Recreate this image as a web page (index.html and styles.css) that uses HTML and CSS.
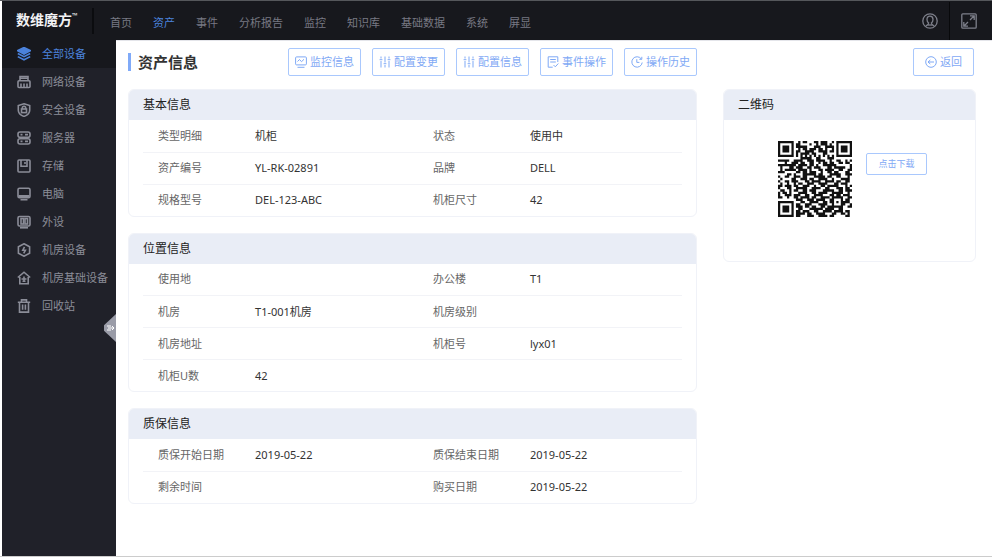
FILE: index.html
```
<!DOCTYPE html>
<html lang="zh-CN">
<head>
    <meta charset="UTF-8">
    <title>资产信息 - 数维魔方</title>
    <link rel="stylesheet" href="styles.css">
</head>
<body>

<header class="topbar">
    <a class="logo" href="#">数维魔方<sup>™</sup></a>
    <nav class="topnav">
        <a href="#">首页</a>
        <a href="#" class="active">资产</a>
        <a href="#">事件</a>
        <a href="#">分析报告</a>
        <a href="#">监控</a>
        <a href="#">知识库</a>
        <a href="#">基础数据</a>
        <a href="#">系统</a>
        <a href="#">屏显</a>
    </nav>
    <button class="top-button" aria-label="用户">
        <svg viewBox="0 0 16 16"><circle cx="8" cy="8" r="7.2"/><path d="M8 3.200c-2 0-3 1.300-3 3.200 0 1.600.6 2.800 1.600 3.600L6 11.500 3.800 13M8 3.200c2 0 3 1.300 3 3.200 0 1.600-.6 2.800-1.600 3.600l.6 1.500 2.200 1.500"/><path d="M5.500 12h5"/></svg>
    </button>
    <button class="top-button bordered" aria-label="全屏">
        <svg viewBox="0 0 16 16"><rect x="0.800" y="0.800" width="14.400" height="14.400" rx="1"/><path d="M9 2.800h4.200V7M13.200 2.800L9 7M7 13.200H2.800V9M2.800 13.200L7 9"/></svg>
    </button>
</header>

<div class="layout">
    <aside class="sidebar">
        <a href="#" class="active">
            <svg viewBox="0 0 14 14"><path class="solid" d="M7 .5l6.500 3.200L7 7 .5 3.700z"/><path d="M.8 6.500L7 9.600l6.200-3.100M.8 9.600L7 12.800l6.200-3.200"/></svg>
            全部设备
        </a>
        <a href="#">
            <svg viewBox="0 0 14 14"><path d="M3 5V1.500h8V5M3 3.300h8"/><rect x="1" y="5.800" width="12" height="6.700" rx="1"/><path d="M4 8.500v4M7 8.500v4M10 8.500v4"/></svg>
            网络设备
        </a>
        <a href="#">
            <svg viewBox="0 0 14 14"><path d="M7 .8l5.700 1.800v4.600c0 2.800-2.200 4.900-5.700 6.200C3.500 12.100 1.300 10 1.300 7.200V2.600z"/><path d="M5.300 6V5a1.700 1.700 0 0 1 3.400 0v1"/><rect x="4.500" y="6" width="5" height="3.600"/></svg>
            安全设备
        </a>
        <a href="#">
            <svg viewBox="0 0 14 14"><rect x="1" y="1" width="12" height="5.200" rx="2"/><rect x="1" y="7.800" width="12" height="5.200" rx="2"/><path d="M3.500 3.600h2M8 3.600h3M3.500 10.400h2M8 10.400h3"/></svg>
            服务器
        </a>
        <a href="#">
            <svg viewBox="0 0 14 14"><rect x="1" y="1" width="12" height="12" rx="1"/><path d="M4 1v6.200h6V1M8 3v2"/></svg>
            存储
        </a>
        <a href="#">
            <svg viewBox="0 0 14 14"><rect x="1" y="1.200" width="12" height="9.500" rx="1.500"/><path d="M1.500 8.800h11M1.500 9.800h11M3.500 12.800h7"/></svg>
            电脑
        </a>
        <a href="#">
            <svg viewBox="0 0 14 14"><rect x="1" y="1.500" width="12" height="9.500" rx="1.500"/><rect x="4" y="3.500" width="2.500" height="5.500"/><rect x="8" y="3.500" width="2.500" height="5.500"/><path d="M3 12.800h8"/></svg>
            外设
        </a>
        <a href="#">
            <svg viewBox="0 0 14 14"><path d="M7 .8l5.600 3v6.400L7 13.200l-5.600-3V3.800z"/><path d="M7.500 3.800L5.800 7.200h2.600L6.700 10.400"/></svg>
            机房设备
        </a>
        <a href="#">
            <svg viewBox="0 0 14 14"><path d="M.8 6.500L7 1.200l6.200 5.300M2.800 6v6.800h8.400V6"/><path d="M7 5.500v5M4.500 8h5M5.500 10.300h3"/></svg>
            机房基础设备
        </a>
        <a href="#">
            <svg viewBox="0 0 14 14"><path d="M.8 3.200h12.400M4.500 3V.9h5V3M2.500 3.500v9.600h9V3.500M5.600 5.500v5.300M8.400 5.500v5.300"/></svg>
            回收站
        </a>
        <button class="collapse" aria-label="收起菜单">
            <svg viewBox="0 0 8 8"><path d="M0 2h4M0 6h4M1 4h6M5 2l2 2-2 2"/></svg>
        </button>
    </aside>

    <main class="content">
        <div class="columns">
            <div class="page-head">
                <h1>资产信息</h1>
                <div class="actions">
                    <button class="action">
                        <svg viewBox="0 0 12 12"><rect x=".6" y=".9" width="10.800" height="8" rx="1"/><path d="M2.500 5.500l2-2 2 2.200 2.500-2.400M2.500 11.300h7"/></svg>
                        监控信息
                    </button>
                    <button class="action">
                        <svg viewBox="0 0 12 12"><path d="M2 .5v2M2 5v6.500M6 .5v6M6 9v2.500M10 .5v2M10 5v6.500M.6 3.700h2.800M4.600 7.700h2.800M8.600 3.700h2.800"/></svg>
                        配置变更
                    </button>
                    <button class="action">
                        <svg viewBox="0 0 12 12"><path d="M2 .5v2M2 5v6.500M6 .5v6M6 9v2.500M10 .5v2M10 5v6.500M.6 3.700h2.800M4.600 7.700h2.800M8.600 3.700h2.800"/></svg>
                        配置信息
                    </button>
                    <button class="action">
                        <svg viewBox="0 0 12 12"><path d="M10.800 6V.8H1.200v10.400h4.500M3.200 3.500h5.600M3.200 6h5.600M6.500 9l1.800 1.800 3-3.300"/></svg>
                        事件操作
                    </button>
                    <button class="action">
                        <svg viewBox="0 0 12 12"><path d="M10.300 3A5.200 5.200 0 1 0 11.200 6.500M10.800.8v2.500H8.300M5.800 3.200v3.200h2.600"/></svg>
                        操作历史
                    </button>
                </div>
            </div>
            <div class="page-back">
                <button class="action">
                    <svg viewBox="0 0 12 12"><circle cx="6" cy="6" r="5.300"/><path d="M9 6H3M5.300 4L3 6l2.300 2"/></svg>
                    返回
                </button>
            </div>
        </div>

        <div class="columns">
            <div class="cards">
                <section class="card">
                    <h2>基本信息</h2>
                    <table>
                        <tr><th scope="row">类型明细</th><td>机柜</td><th scope="row">状态</th><td>使用中</td></tr>
                        <tr><th scope="row">资产编号</th><td>YL-RK-02891</td><th scope="row">品牌</th><td>DELL</td></tr>
                        <tr><th scope="row">规格型号</th><td>DEL-123-ABC</td><th scope="row">机柜尺寸</th><td>42</td></tr>
                    </table>
                </section>

                <section class="card">
                    <h2>位置信息</h2>
                    <table>
                        <tr><th scope="row">使用地</th><td></td><th scope="row">办公楼</th><td>T1</td></tr>
                        <tr><th scope="row">机房</th><td>T1-001机房</td><th scope="row">机房级别</th><td></td></tr>
                        <tr><th scope="row">机房地址</th><td></td><th scope="row">机柜号</th><td>lyx01</td></tr>
                        <tr><th scope="row">机柜U数</th><td>42</td></tr>
                    </table>
                </section>

                <section class="card">
                    <h2>质保信息</h2>
                    <table>
                        <tr><th scope="row">质保开始日期</th><td>2019-05-22</td><th scope="row">质保结束日期</th><td>2019-05-22</td></tr>
                        <tr><th scope="row">剩余时间</th><td></td><th scope="row">购买日期</th><td>2019-05-22</td></tr>
                    </table>
                </section>
            </div>

            <section class="card qr-card">
                <h2>二维码</h2>
                <div class="qr-body">
                    <svg class="qr" viewBox="0 0 33 33" preserveAspectRatio="none" role="img" aria-label="资产二维码"><path id="qr_path"/></svg>
                    <button class="download">点击下载</button>
                </div>
            </section>
        </div>
    </main>
</div>

<script src="script.js"></script>
</body>
</html>
```
FILE: styles.css
```
* {
    box-sizing: border-box;
}

body {
    margin: 0;
    padding-left: 2px;
    min-height: 100vh;
    display: flex;
    flex-direction: column;
    font-family: "Noto Sans", "Noto Sans CJK SC", sans-serif;
    font-size: 11px;
    line-height: 16px;
    color: #444;
    background-color: #fff;
    border-top: 1px solid #55575b;
    border-bottom: 1px solid #ccc;
}

a {
    color: inherit;
    text-decoration: none;
}

button {
    font: inherit;
    padding: 0;
    cursor: pointer;
}

svg {
    display: block;
    flex: none;
    fill: none;
    stroke: currentColor;
}

/* Top bar */
.topbar {
    display: flex;
    align-items: center;
    height: 39px;
    background-color: #17181d;
    color: #777983;
}

.logo {
    width: 92px;
    height: 26px;
    padding-left: 14px;
    border-right: 2px solid #0b0c0f;
    color: #f2f2f4;
    font-size: 14px;
    font-weight: bold;
    line-height: 24px;
    white-space: nowrap;
}

.logo sup {
    font-size: 7px;
    font-weight: normal;
    line-height: 0;
    vertical-align: 7px;
}

.topnav {
    display: flex;
    flex: 1;
    gap: 21px;
    padding: 4px 0 0 16px;
    white-space: nowrap;
}

.topnav .active {
    color: #4b82dc;
}

.top-button {
    display: flex;
    align-items: center;
    justify-content: center;
    width: 38px;
    height: 38px;
    border: none;
    background: none;
    color: #7d7f8a;
}

.top-button.bordered {
    width: 43px;
    padding-right: 4px;
    border-left: 1px solid #08090b;
}

.top-button svg {
    width: 16px;
    height: 16px;
    stroke-width: 1.3;
}

/* Side menu */
.layout {
    display: flex;
    flex: 1;
}

.sidebar {
    position: relative;
    flex: none;
    width: 114px;
    background-color: #202129;
    color: #8b8d98;
}

.sidebar a {
    display: flex;
    align-items: center;
    gap: 11px;
    height: 28px;
    padding-left: 15px;
    white-space: nowrap;
}

.sidebar a svg {
    width: 14px;
    height: 14px;
    stroke-width: 1.6;
}

.sidebar .active {
    background-color: #17181d;
    color: #4b82dc;
}

.sidebar .solid {
    fill: currentColor;
}

.collapse {
    position: absolute;
    top: 274px;
    right: 0;
    display: flex;
    align-items: center;
    justify-content: flex-end;
    width: 12px;
    height: 28px;
    padding-right: 1px;
    border: none;
    background-color: #9a9ca8;
    color: #fff;
    clip-path: polygon(100% 0, 100% 100%, 0 60%, 0 40%);
}

.collapse svg {
    width: 8px;
    height: 8px;
}

/* Page */
.content {
    flex: 1;
    min-width: 0;
    padding: 0 16px 24px 12px;
    border-top: 1px solid #e4e5ea;
}

.columns {
    display: grid;
    grid-template-columns: 9fr 4fr;
    column-gap: 26px;
    align-items: start;
}

.page-head,
.page-back {
    display: flex;
    align-items: center;
    justify-content: space-between;
    padding: 7px 0 13px;
}

.page-back {
    justify-content: flex-end;
    padding-right: 2px;
}

h1 {
    margin: 0;
    padding-left: 7px;
    border-left: 3px solid #80aaf8;
    color: #333;
    font-size: 15px;
    font-weight: bold;
    line-height: 18px;
}

.actions {
    display: flex;
    gap: 11px;
}

.action {
    display: flex;
    align-items: center;
    gap: 3px;
    height: 28px;
    padding: 0 6px;
    border: 1px solid #a9c8fd;
    border-radius: 2px;
    background-color: #fff;
    color: #7fa9f5;
    white-space: nowrap;
}

.page-back .action {
    padding: 0 11px;
}

.action svg {
    width: 12px;
    height: 12px;
}

.cards {
    display: grid;
    gap: 16px;
}

.card {
    border: 1px solid #f0f2f8;
    border-radius: 6px;
    overflow: hidden;
}

.card h2 {
    margin: 0;
    padding-left: 14px;
    background-color: #e9edf6;
    color: #222;
    font-size: 12px;
    font-weight: normal;
    line-height: 30px;
}

.card table {
    width: calc(100% - 28px);
    margin: 0 14px -1px;
    border-collapse: collapse;
    table-layout: fixed;
}

.card th,
.card td {
    height: 32px;
    padding: 0 0 0 15px;
    border-bottom: 1px solid #f2f3f7;
    text-align: left;
    font-weight: normal;
}

.card th {
    width: 18%;
    color: #666;
}

.card td {
    width: 33%;
    color: #333;
}

.card td:last-child {
    width: auto;
}

/* QR code */
.qr-body {
    display: flex;
    align-items: flex-start;
    gap: 14px;
    min-height: 141px;
    padding: 21px 16px 0 54px;
}

.qr {
    width: 74px;
    height: 76px;
}

.qr path {
    fill: #111;
    stroke: none;
}

.download {
    width: 61px;
    height: 22px;
    margin-top: 12px;
    border: 1px solid #a9c8fd;
    border-radius: 2px;
    background-color: #fff;
    color: #7fa9f5;
    font-size: 9px;
}
```
FILE: script.js
```
// One string per row, # is a dark module
const rows = [
    "#######..#.##...##.###..#.#######",
    "#.....#.##....#..#.###.#..#.....#",
    "#.###.#.#####...###..####.#.###.#",
    "#.###.#..#.##.###.##.#..#.#.###.#",
    "#.###.#.##..####..####.##.#.###.#",
    "#.....#.#.####.##...##....#.....#",
    "#######.#.#.#.#.#.#.#.#.#.#######",
    "..........#####..##...###........",
    "#####..####..###.####..#..##..#.#",
    "...#..###.##..##..#.##.##..##.##.",
    "########.####.##.#..######......#",
    ".#...##.###..##.###...##.#####..#",
    ".#.#####.####.#...##.####..##..##",
    "###.....##.##.###..#..##.##...##.",
    "....##.#...######.##...#####..###",
    "#..##..###.##...#####.##..##...#.",
    ".#....##..###.##..####..#...####.",
    "#..##.###...##.####..####.##..##.",
    ".#..#..#.##..###..####...##.###..",
    "##.###.##..###..#..##.#####...#.#",
    "#...##..#####..####..##...###.##.",
    ".##..#.##..##.###...#####..##.###",
    "#.##.#...####..##.####..#####..#.",
    "#..###.###..##..####...##.##.###.",
    "##..#..##.####.##..####.#####..##",
    "........###..###.####..##...#.##.",
    "#######...##..####..##.##.#.####.",
    "#.....#.##..###...####..#...##..#",
    "#.###.#.###.##.##..##.#######..##",
    "#.###.#..##...######.####..##....",
    "#.###.#.##.###..##..####.####.##.",
    "#.....#.####.##..####...##..##.#.",
    "#######.##...###..####.##.....##."
];

let d = "";
rows.forEach((row, y) => {
    [...row].forEach((cell, x) => {
        if (cell === "#") {
            d += `M${x} ${y}h1v1h-1z`;
        }
    });
});
document.getElementById("qr_path").setAttribute("d", d);
```
